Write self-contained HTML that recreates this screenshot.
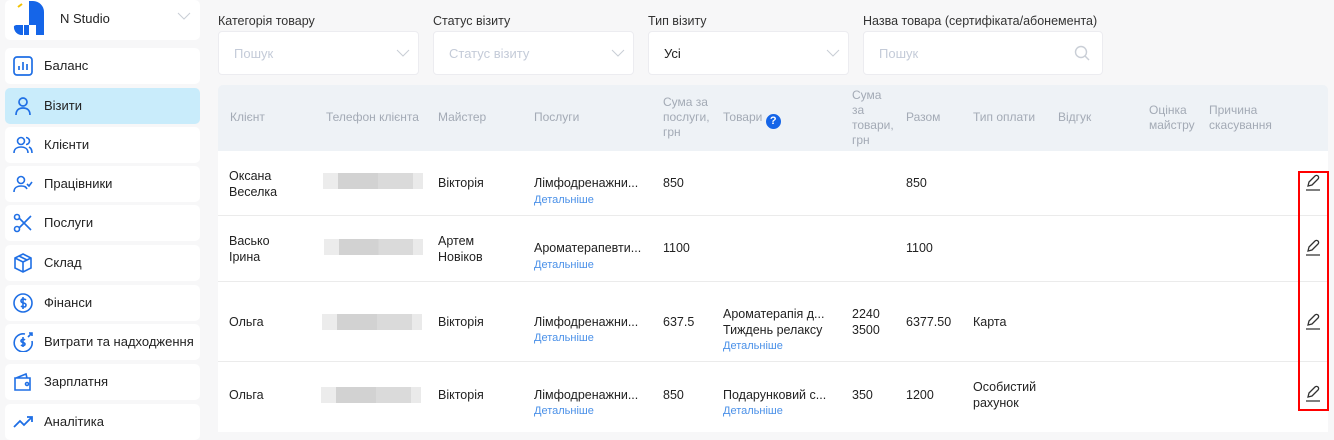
<!DOCTYPE html><html><head><meta charset="utf-8"><style>
*{margin:0;padding:0;box-sizing:border-box}
body{width:1334px;height:426px;overflow:hidden;background:#f7f7f8;font-family:"Liberation Sans",sans-serif;font-size:13px;color:#222;position:relative}
.a{position:absolute;white-space:nowrap}
.nav{position:absolute;left:5px;width:195px;height:36px;background:#fff;border-radius:5px}
.nav span{position:absolute;left:39px;top:10px;font-size:13px;color:#222}
.nav svg{position:absolute;left:8px;top:8px}
.lbl{font-size:12.5px;color:#333}
.box{position:absolute;top:31px;height:44px;background:#fff;border:1px solid #ececf0;border-radius:4px}
.box .p{position:absolute;left:15px;top:14px;color:#c4cbd8;font-size:13px}
.h{position:absolute;font-size:12px;color:#a3aab5;line-height:15px}
.row{position:absolute;left:218px;width:1110px;background:#fff;border-bottom:1px solid #ebebeb}
.t{position:absolute;font-size:12.5px;line-height:16px;color:#222;white-space:nowrap}
.d{position:absolute;font-size:11px;color:#4a90e8;white-space:nowrap}
.blur{position:absolute;height:16px;background:linear-gradient(90deg,#ececec 0 15%,#d2d2d2 15% 55%,#dadada 55% 90%,#eaeaea 90%)}
</style></head><body>
<div class="nav" style="top:0;height:40px"></div>
<svg class="a" style="left:13px;top:1px" width="32" height="34" viewBox="0 0 32 34"><path d="M16 0h4a11 11 0 0 1 11 11v23h-8V24h-7z" fill="#1565e8"/><path d="M3 24h7v10A8 8 0 0 1 1 25z" fill="#1565e8"/><path d="M11 24h5v10h-5z" fill="#1565e8"/><path d="M5 6l4-3" stroke="#f2c200" stroke-width="2"/></svg>
<div class="a" style="left:60px;top:11px;font-size:13px">N Studio</div>
<svg class="a" style="left:177px;top:12px" width="14" height="9"><path d="M1 1l6 6 6-6" stroke="#c9ced6" fill="none"/></svg>
<div class="nav" style="top:48px"><svg width="20" height="20" viewBox="0 0 20 20" fill="none" stroke="#1f6fe5" stroke-width="1.7"><rect x="1" y="1" width="18" height="18" rx="3"/><path d="M6 14v-4M10 14V6M14 14v-6"/></svg><span>Баланс</span></div>
<div class="nav" style="top:88px;background:#c9ecfb"><svg width="20" height="20" viewBox="0 0 20 20" fill="none" stroke="#1f6fe5" stroke-width="1.7"><circle cx="10" cy="6" r="4"/><path d="M3 19c0-5 3-7 7-7s7 2 7 7"/></svg><span>Візити</span></div>
<div class="nav" style="top:127px"><svg width="20" height="20" viewBox="0 0 20 20" fill="none" stroke="#1f6fe5" stroke-width="1.6"><circle cx="8" cy="6" r="3.5"/><path d="M1 18c0-4 3-6 7-6s7 2 7 6M13 2.5a3.5 3.5 0 0 1 0 7M16 12c2 1 3 3 3 6"/></svg><span>Клієнти</span></div>
<div class="nav" style="top:166px"><svg width="20" height="20" viewBox="0 0 20 20" fill="none" stroke="#1f6fe5" stroke-width="1.6"><circle cx="8" cy="6" r="3.5"/><path d="M1 18c0-4 3-6 7-6s5 1 6 3M14 10l2 2 3-4"/></svg><span>Працівники</span></div>
<div class="nav" style="top:205px"><svg width="20" height="20" viewBox="0 0 20 20" fill="none" stroke="#1f6fe5" stroke-width="1.6"><circle cx="4" cy="4" r="2.5"/><circle cx="4" cy="16" r="2.5"/><path d="M6 5l12 12M6 15L18 3"/></svg><span>Послуги</span></div>
<div class="nav" style="top:245px"><svg width="20" height="20" viewBox="0 0 20 20" fill="none" stroke="#1f6fe5" stroke-width="1.6"><path d="M10 1l8 4v10l-8 4-8-4V5zM2 5l8 4 8-4M10 9v10M6 3l8 4"/></svg><span>Склад</span></div>
<div class="nav" style="top:285px"><svg width="20" height="20" viewBox="0 0 20 20" fill="none" stroke="#1f6fe5" stroke-width="1.6"><circle cx="10" cy="10" r="9"/><path d="M13 7c-1-1-5-2-5 1s5 1 5 4-4 2-5 1M10 4v12"/></svg><span>Фінанси</span></div>
<div class="nav" style="top:324px"><svg width="20" height="20" viewBox="0 0 20 20" fill="none" stroke="#1f6fe5" stroke-width="1.6"><path d="M12 2a9 9 0 1 0 7 7"/><path d="M12 8c-1-1-4-1-4 1s4 1 4 3-3 2-4 1M10 5v10M15 5l4-4M16 1h3v3"/></svg><span>Витрати та надходження</span></div>
<div class="nav" style="top:364px"><svg width="20" height="20" viewBox="0 0 20 20" fill="none" stroke="#1f6fe5" stroke-width="1.6"><path d="M2 6h15v12H2zM3 6l10-4 1 4"/><circle cx="14" cy="12" r="1.5"/></svg><span>Зарплатня</span></div>
<div class="nav" style="top:404px"><svg width="20" height="20" viewBox="0 0 20 20" fill="none" stroke="#1f6fe5" stroke-width="1.8"><path d="M1 15l6-6 4 4 8-8M14 5h5v5"/></svg><span>Аналітика</span></div>

<div class="a lbl" style="left:218px;top:14px">Категорія товару</div>
<div class="a lbl" style="left:433px;top:14px">Статус візиту</div>
<div class="a lbl" style="left:648px;top:14px">Тип візиту</div>
<div class="a lbl" style="left:863px;top:14px">Назва товара (сертифіката/абонемента)</div>
<div class="box" style="left:218px;width:201px"><div class="p">Пошук</div><svg class="a" style="left:177px;top:17px" width="14" height="9"><path d="M1 1l6 6 6-6" stroke="#c9ced6" fill="none"/></svg></div>
<div class="box" style="left:433px;width:201px"><div class="p">Статус візиту</div><svg class="a" style="left:177px;top:17px" width="14" height="9"><path d="M1 1l6 6 6-6" stroke="#c9ced6" fill="none"/></svg></div>
<div class="box" style="left:648px;width:201px"><div class="p" style="color:#222">Усі</div><svg class="a" style="left:177px;top:17px" width="14" height="9"><path d="M1 1l6 6 6-6" stroke="#c9ced6" fill="none"/></svg></div>
<div class="box" style="left:863px;width:240px"><div class="p">Пошук</div><svg class="a" style="left:210px;top:13px" width="16" height="16" fill="none" stroke="#c9ced6" stroke-width="1.4"><circle cx="7" cy="7" r="5.5"/><path d="M11 11l4 4"/></svg></div>

<div class="a" style="left:218px;top:85px;width:1110px;height:66px;background:#eef2f6;border-radius:5px 5px 0 0"></div>
<div class="h" style="left:230px;top:110px">Клієнт</div>
<div class="h" style="left:326px;top:110px">Телефон клієнта</div>
<div class="h" style="left:438px;top:110px">Майстер</div>
<div class="h" style="left:534px;top:110px">Послуги</div>
<div class="h" style="left:663px;top:95px">Сума за<br>послуги,<br>грн</div>
<div class="h" style="left:723px;top:110px">Товари <span style="display:inline-block;width:15px;height:15px;border-radius:50%;background:#1565e8;color:#fff;text-align:center;font-weight:bold;font-size:11px;line-height:15px;vertical-align:-3px">?</span></div>
<div class="h" style="left:852px;top:88px">Сума<br>за<br>товари,<br>грн</div>
<div class="h" style="left:906px;top:110px">Разом</div>
<div class="h" style="left:973px;top:110px">Тип оплати</div>
<div class="h" style="left:1058px;top:110px">Відгук</div>
<div class="h" style="left:1149px;top:103px">Оцінка<br>майстру</div>
<div class="h" style="left:1209px;top:103px">Причина<br>скасування</div>

<div class="row" style="top:151px;height:65px"></div>
<div class="row" style="top:216px;height:66px"></div>
<div class="row" style="top:282px;height:80px"></div>
<div class="row" style="top:362px;height:70px;border:none"></div>

<div class="t" style="left:229px;top:168px">Оксана<br>Веселка</div>
<div class="blur" style="left:323px;top:173px;width:100px"></div>
<div class="t" style="left:438px;top:175px">Вікторія</div>
<div class="t" style="left:534px;top:175px">Лімфодренажни...</div><div class="d" style="left:534px;top:194px">Детальніше</div>
<div class="t" style="left:663px;top:175px">850</div><div class="t" style="left:906px;top:175px">850</div>

<div class="t" style="left:229px;top:233px">Васько<br>Ірина</div>
<div class="blur" style="left:324px;top:239px;width:99px"></div>
<div class="t" style="left:438px;top:233px">Артем<br>Новіков</div>
<div class="t" style="left:534px;top:240px">Ароматерапевти...</div><div class="d" style="left:534px;top:259px">Детальніше</div>
<div class="t" style="left:663px;top:240px">1100</div><div class="t" style="left:906px;top:240px">1100</div>

<div class="t" style="left:229px;top:314px">Ольга</div>
<div class="blur" style="left:322px;top:314px;width:100px"></div>
<div class="t" style="left:438px;top:314px">Вікторія</div>
<div class="t" style="left:534px;top:314px">Лімфодренажни...</div><div class="d" style="left:534px;top:332px">Детальніше</div>
<div class="t" style="left:663px;top:314px">637.5</div>
<div class="t" style="left:723px;top:306px">Ароматерапія д...<br>Тиждень релаксу</div><div class="d" style="left:723px;top:340px">Детальніше</div>
<div class="t" style="left:852px;top:306px">2240<br>3500</div>
<div class="t" style="left:906px;top:314px">6377.50</div>
<div class="t" style="left:973px;top:314px">Карта</div>

<div class="t" style="left:229px;top:387px">Ольга</div>
<div class="blur" style="left:321px;top:387px;width:100px"></div>
<div class="t" style="left:438px;top:387px">Вікторія</div>
<div class="t" style="left:534px;top:387px">Лімфодренажни...</div><div class="d" style="left:534px;top:405px">Детальніше</div>
<div class="t" style="left:663px;top:387px">850</div>
<div class="t" style="left:723px;top:387px">Подарунковий с...</div><div class="d" style="left:723px;top:405px">Детальніше</div>
<div class="t" style="left:852px;top:387px">350</div>
<div class="t" style="left:906px;top:387px">1200</div>
<div class="t" style="left:973px;top:379px">Особистий<br>рахунок</div>

<svg class="a" style="left:1305px;top:174px" width="16" height="18" fill="none" stroke="#333" stroke-width="1.3"><path d="M3 12l1-4 6-6a2 2 0 0 1 3 3l-6 6zM1 16h14"/></svg>
<svg class="a" style="left:1305px;top:239px" width="16" height="18" fill="none" stroke="#333" stroke-width="1.3"><path d="M3 12l1-4 6-6a2 2 0 0 1 3 3l-6 6zM1 16h14"/></svg>
<svg class="a" style="left:1305px;top:313px" width="16" height="18" fill="none" stroke="#333" stroke-width="1.3"><path d="M3 12l1-4 6-6a2 2 0 0 1 3 3l-6 6zM1 16h14"/></svg>
<svg class="a" style="left:1305px;top:385px" width="16" height="18" fill="none" stroke="#333" stroke-width="1.3"><path d="M3 12l1-4 6-6a2 2 0 0 1 3 3l-6 6zM1 16h14"/></svg>
<div class="a" style="left:1298px;top:171px;width:31px;height:240px;border:2px solid #f00"></div>
</body></html>
